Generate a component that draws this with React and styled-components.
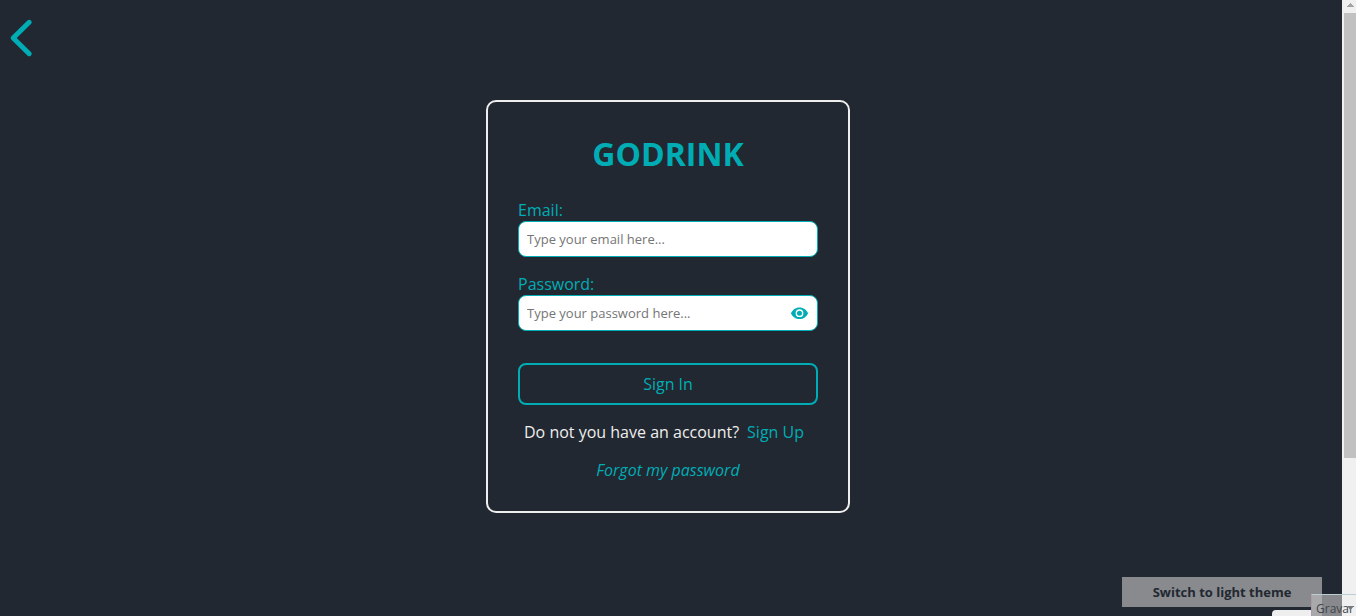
import React, { useState } from "react";
import styled, { createGlobalStyle, css } from "styled-components";

const accent = "#00adb5";
const dark = "#222831";
const light = "#eeeeee";

const GlobalStyle = createGlobalStyle`
  *, *::before, *::after { box-sizing: border-box; }
  body {
    margin: 0;
    background: ${dark};
    color: ${light};
    font: 16px/22px "Open Sans", "Noto Sans", sans-serif;
  }
  button, input { font-family: inherit; }
`;

const Shell = styled.div`
  display: flex;
  height: 100vh;
  overflow: hidden;
`;

const Page = styled.main`
  flex: 1;
  min-width: 0;
  display: flex;
  justify-content: center;
  align-items: flex-start;
  padding: 100px 6px 32px 0;
`;

const BackLink = styled.a`
  position: absolute;
  top: 18px;
  left: 8px;
  display: flex;
`;

const Card = styled.form`
  width: 364px;
  max-width: 100%;
  display: flex;
  flex-direction: column;
  padding: 30px;
  border: 2px solid ${light};
  border-radius: 10px;
`;

const Title = styled.h1`
  margin: 0 0 23px;
  color: ${accent};
  font-size: 32px;
  line-height: 44px;
  font-weight: 700;
  text-align: center;
`;

const Field = styled.div`
  display: flex;
  flex-direction: column;
  margin-bottom: 16px;
`;

const Label = styled.label`
  color: ${accent};
`;

const InputWrap = styled.div`
  position: relative;
  display: flex;
`;

const Input = styled.input`
  flex: 1;
  min-width: 0;
  height: 36px;
  padding: 0 8px;
  border: 1px solid ${accent};
  border-radius: 8px;
  background: #fff;
  color: ${dark};
  font-size: 13px;
  outline: none;
  &::placeholder { color: #757575; opacity: 1; }
`;

const EyeButton = styled.button`
  position: absolute;
  top: 9px;
  right: 9px;
  display: flex;
  padding: 0;
  border: 0;
  background: none;
  color: ${accent};
  cursor: pointer;
`;

const SubmitButton = styled.button`
  height: 42px;
  margin: 16px 0;
  border: 2px solid ${accent};
  border-radius: 8px;
  background: transparent;
  color: ${accent};
  font-size: 16px;
  line-height: 22px;
  cursor: pointer;
`;

const SignUpRow = styled.p`
  display: flex;
  gap: 8px;
  margin: 0 6px 16px;
  white-space: nowrap;
`;

const TextLink = styled.a`
  color: ${accent};
  text-decoration: none;
  ${({ $quiet }) => $quiet && css`
    align-self: center;
    font-style: italic;
  `}
`;

const ThemeButton = styled.button`
  position: fixed;
  right: 34px;
  bottom: 9px;
  width: 200px;
  height: 30px;
  padding: 0;
  border: 0;
  background: #888a8e;
  color: ${dark};
  font-size: 13px;
  font-weight: 700;
  cursor: pointer;
`;

const ScrollRail = styled.div`
  flex: 0 0 14px;
  display: flex;
  flex-direction: column;
  background: #f0f0f0;
`;

const RailCap = styled.div`
  height: 13px;
  display: flex;
  justify-content: center;
  padding: 3px 0 0 2px;
`;

const RailThumb = styled.div`
  height: 72.3%;
  margin-left: 2px;
  background: #c1c1c1;
`;

const BottomTab = styled.div`
  position: fixed;
  right: 45px;
  bottom: 0;
  width: 39px;
  height: 6px;
  border-radius: 4px 0 0 0;
  background: ${light};
`;

const Tooltip = styled.div`
  position: fixed;
  right: 0;
  bottom: 0;
  width: 45px;
  height: 22px;
  display: flex;
  border-top: 1px solid #b9cdd3;
  border-left: 1px solid #ac9aac;
  background: linear-gradient(90deg, #a9a9ab 0 10px, #87898d 10px 30px, #f0f0f0 30px);
  color: #43474d;
  padding: 3px 0 0 4px;
  font-size: 12px;
  line-height: 22px;
  overflow: hidden;
`;

const DownMark = styled.svg`
  position: absolute;
  right: 2px;
  top: 11px;
`;

export default function App() {
  const [visible, setVisible] = useState(false);
  return (
    <>
      <GlobalStyle />
      <Shell>
        <Page>
          <BackLink href="#" aria-label="Back">
            <svg width="26" height="40" viewBox="0 0 26 40" fill="none" aria-hidden="true">
              <path d="M21.2 4.3 5.2 20l16 15.7" stroke={accent} strokeWidth="5" strokeLinecap="round" strokeLinejoin="round" />
            </svg>
          </BackLink>
          <Card onSubmit={(e) => e.preventDefault()}>
            <Title>GODRINK</Title>
            <Field>
              <Label htmlFor="email">Email:</Label>
              <InputWrap>
                <Input id="email" type="email" placeholder="Type your email here..." />
              </InputWrap>
            </Field>
            <Field>
              <Label htmlFor="password">Password:</Label>
              <InputWrap>
                <Input id="password" type={visible ? "text" : "password"} placeholder="Type your password here..." />
                <EyeButton type="button" aria-label="Show password" onClick={() => setVisible(!visible)}>
                  <svg width="18" height="18" viewBox="0 0 18 18" aria-hidden="true">
                    <path d="M0 9.2C1.4 5.7 4.6 3.4 8.5 3.4s7.100 2.300 8.500 5.800c-1.400 3.500-4.600 5.800-8.500 5.800S1.400 12.700 0 9.200z" fill="currentColor" />
                    <circle cx="8.500" cy="9.200" r="3.200" fill="none" stroke="#fff" strokeWidth="1.400" />
                  </svg>
                </EyeButton>
              </InputWrap>
            </Field>
            <SubmitButton type="submit">Sign In</SubmitButton>
            <SignUpRow>
              Do not you have an account?
              <TextLink href="#">Sign Up</TextLink>
            </SignUpRow>
            <TextLink href="#" $quiet>Forgot my password</TextLink>
          </Card>
        </Page>
        <ScrollRail aria-hidden="true">
          <RailCap>
            <svg width="7" height="4" viewBox="0 0 7 4"><path d="M3 0h1v1h1v1h1v1h1v1H0V3h1V2h1V1h1z" fill="#a3a3a3" /></svg>
          </RailCap>
          <RailThumb />
        </ScrollRail>
      </Shell>
      <ThemeButton type="button">Switch to light theme</ThemeButton>
      <BottomTab />
      <Tooltip>
        Gravar
        <DownMark width="7" height="4" viewBox="0 0 7 4" aria-hidden="true"><path d="M0 0h7L3.5 4z" fill="#77797c" /></DownMark>
      </Tooltip>
    </>
  );
}
